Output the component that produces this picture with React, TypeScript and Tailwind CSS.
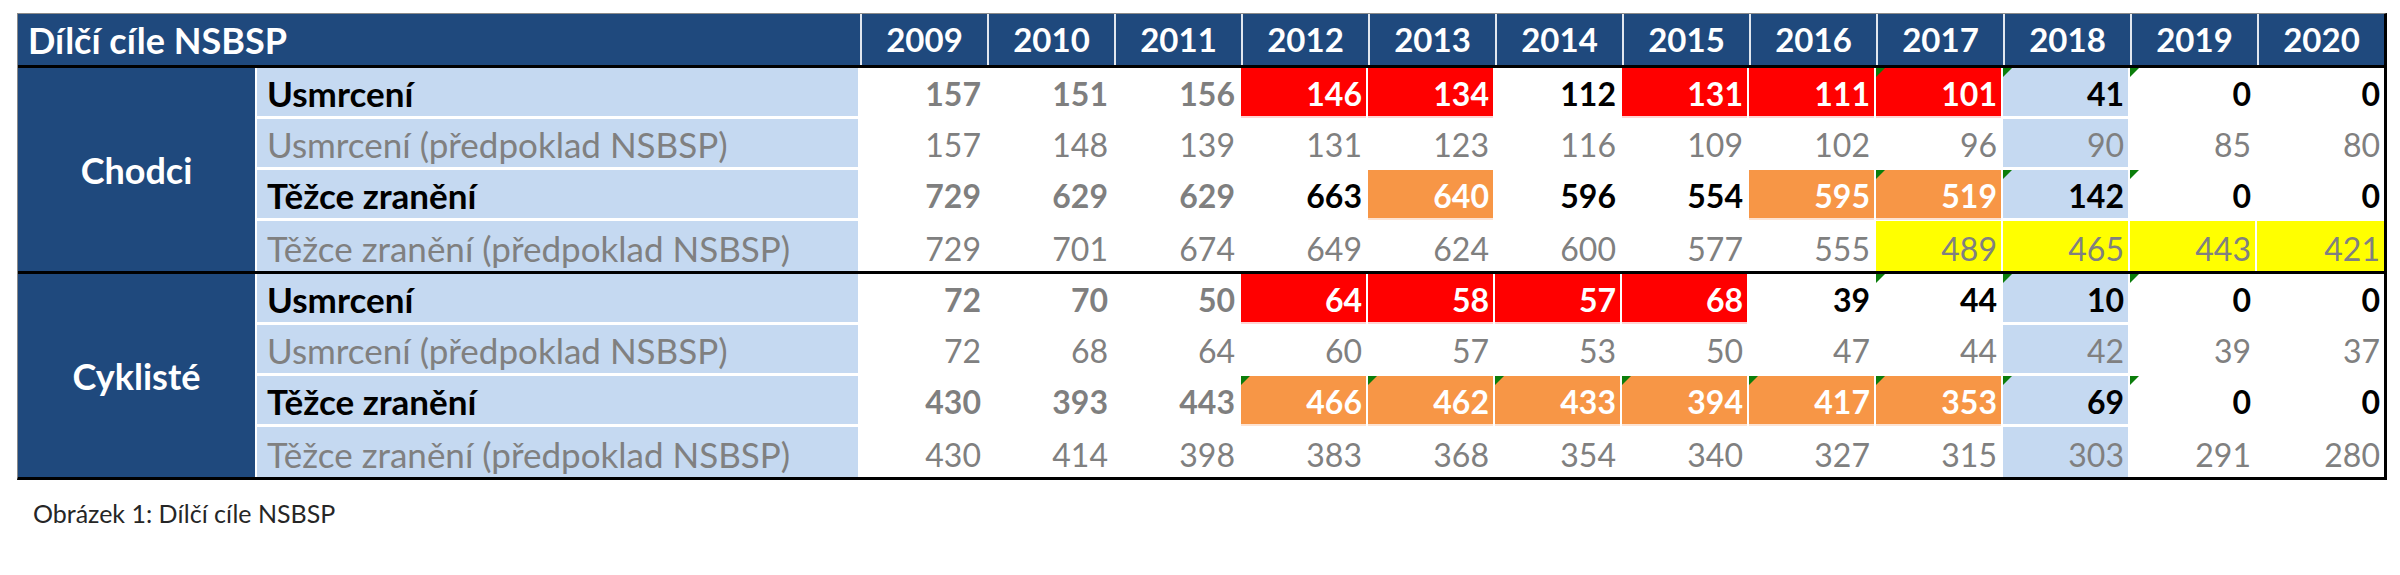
import React from "react";

type Fill = "red" | "orange" | "yellow" | "lb" | null;

type Row = {
  label: string;
  main: boolean;
  values: number[];
  red?: number[];
  orange?: number[];
  yellow?: number[];
  tri?: number[];
};

const YEARS = [2009, 2010, 2011, 2012, 2013, 2014, 2015, 2016, 2017, 2018, 2019, 2020];

const GROUPS: { name: string; rows: Row[] }[] = [
  {
    name: "Chodci",
    rows: [
      {
        label: "Usmrcení",
        main: true,
        values: [157, 151, 156, 146, 134, 112, 131, 111, 101, 41, 0, 0],
        red: [3, 4, 6, 7, 8],
        tri: [8, 9, 10],
      },
      {
        label: "Usmrcení (předpoklad NSBSP)",
        main: false,
        values: [157, 148, 139, 131, 123, 116, 109, 102, 96, 90, 85, 80],
      },
      {
        label: "Těžce zranění",
        main: true,
        values: [729, 629, 629, 663, 640, 596, 554, 595, 519, 142, 0, 0],
        orange: [4, 7, 8],
        tri: [8, 9, 10],
      },
      {
        label: "Těžce zranění (předpoklad NSBSP)",
        main: false,
        values: [729, 701, 674, 649, 624, 600, 577, 555, 489, 465, 443, 421],
        yellow: [8, 9, 10, 11],
      },
    ],
  },
  {
    name: "Cyklisté",
    rows: [
      {
        label: "Usmrcení",
        main: true,
        values: [72, 70, 50, 64, 58, 57, 68, 39, 44, 10, 0, 0],
        red: [3, 4, 5, 6],
        tri: [8, 9, 10],
      },
      {
        label: "Usmrcení (předpoklad NSBSP)",
        main: false,
        values: [72, 68, 64, 60, 57, 53, 50, 47, 44, 42, 39, 37],
      },
      {
        label: "Těžce zranění",
        main: true,
        values: [430, 393, 443, 466, 462, 433, 394, 417, 353, 69, 0, 0],
        orange: [3, 4, 5, 6, 7, 8],
        tri: [3, 4, 5, 6, 7, 8, 9, 10],
      },
      {
        label: "Těžce zranění (předpoklad NSBSP)",
        main: false,
        values: [430, 414, 398, 383, 368, 354, 340, 327, 315, 303, 291, 280],
      },
    ],
  },
];

const FILL_CLASS: Record<string, string> = {
  red: "bg-[#ff0000] shadow-[0_2px_0_#ffd3d3]",
  orange: "bg-[#f79646] shadow-[0_2px_0_#fde3d2]",
  yellow: "bg-[#ffff00]",
  lb: "bg-[#c5d9f1]",
};

function fillOf(row: Row, i: number): Fill {
  if (row.red?.includes(i)) return "red";
  if (row.orange?.includes(i)) return "orange";
  if (row.yellow?.includes(i)) return "yellow";
  if (i === 9) return "lb";
  return null;
}

function textOf(row: Row, i: number, fill: Fill) {
  if (!row.main) return "font-normal text-[#808080]";
  if (fill === "red" || fill === "orange") return "font-bold text-white";
  if (i < 3) return "font-bold text-[#7f7f7f]";
  return "font-bold text-black";
}

function ValueCell({ row, i, last }: { row: Row; i: number; last: boolean }) {
  const fill = fillOf(row, i);
  return (
    <div className={`w-[127px] h-full ${last ? "" : "border-r-2 border-white"}`}>
      <div
        className={`relative h-full flex items-end justify-end pr-[4px] pb-[6px] text-[32px] leading-[32px] ${
          fill ? FILL_CLASS[fill] : ""
        } ${textOf(row, i, fill)}`}
      >
        {row.tri?.includes(i) && (
          <span className="absolute left-0 top-0 w-0 h-0 border-t-[9px] border-r-[9px] border-t-[#0b7d0b] border-r-transparent" />
        )}
        {row.values[i]}
      </div>
    </div>
  );
}

function Group({ name, rows, divider }: { name: string; rows: Row[]; divider: boolean }) {
  return (
    <div className={`flex ${divider ? "border-b-[3px] border-black" : ""}`}>
      <div className="w-[239px] border-r-2 border-white bg-[#1f497d] flex items-center justify-center text-white font-bold text-[36px]">
        {name}
      </div>
      <div className="flex flex-col">
        {rows.map((row, r) => (
          <div
            key={r}
            className={`flex ${r < rows.length - 1 ? "h-[51px] border-b-[3px] border-white" : "h-[50px]"}`}
          >
            <div className="w-[603px] border-r-2 border-white">
              <div
                className={`h-full bg-[#c5d9f1] flex items-end pl-[10px] pb-[6px] text-[35px] leading-[34px] ${
                  row.main ? "font-bold text-black" : "text-[#808080]"
                }`}
              >
                {row.label}
              </div>
            </div>
            {YEARS.map((_, i) => (
              <ValueCell key={i} row={row} i={i} last={i === YEARS.length - 1} />
            ))}
          </div>
        ))}
      </div>
    </div>
  );
}

export default function App() {
  return (
    <div className="min-h-screen bg-white pl-[17px] pt-[13px] font-['Lato','Liberation_Sans',sans-serif]">
      <div className="w-[2370px] border-t border-l border-t-[#8a8a8a] border-l-[#8a8a8a] border-r-[3px] border-b-[3px] border-r-black border-b-black">
        <div className="flex h-[54px] bg-[#1f497d] border-b-[3px] border-black text-white font-bold">
          <div className="w-[842px] flex items-center pl-[10px] text-[36px]">Dílčí cíle NSBSP</div>
          {YEARS.map((y) => (
            <div
              key={y}
              className="w-[127px] flex items-center justify-center border-l-2 border-[#e1e7ef] text-[33px]"
            >
              {y}
            </div>
          ))}
        </div>
        {GROUPS.map((g, gi) => (
          <Group key={g.name} name={g.name} rows={g.rows} divider={gi === 0} />
        ))}
      </div>
      <div className="mt-[21px] pl-[16px] text-[25px] leading-[25px] text-[#262626]">
        Obrázek 1: Dílčí cíle NSBSP
      </div>
    </div>
  );
}
